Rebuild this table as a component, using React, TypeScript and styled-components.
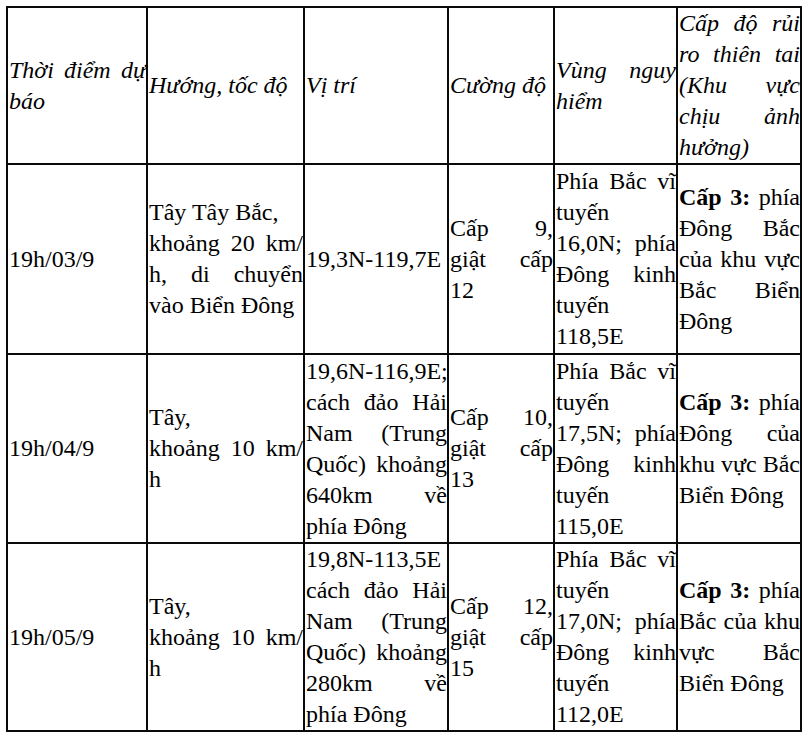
import React from "react";
import styled, { createGlobalStyle } from "styled-components";

const GlobalStyle = createGlobalStyle`
  html, body {
    margin: 0;
    padding: 0;
    background: #ffffff;
  }
  body {
    font-family: "Liberation Serif", "Times New Roman", serif;
    color: #000000;
  }
`;

const Page = styled.div`
  padding: 6px 0 0 6px;
`;

const Table = styled.table`
  border-collapse: separate;
  border-spacing: 0;
  table-layout: fixed;
  width: 796px;
  border-left: 2px solid #0a0a0a;
  border-top: 2px solid #0a0a0a;
  font-family: "Liberation Serif", "Times New Roman", serif;
  font-size: 24px;
  line-height: 31px;
  color: #000;
`;

const Col = styled.col<{ $w: number }>`
  width: ${(p) => p.$w}px;
`;

const Row = styled.tr<{ $h: number }>`
  height: ${(p) => p.$h}px;
`;

const HeadCell = styled.th`
  box-sizing: border-box;
  padding: 0 0 0 1px;
  border-right: 2px solid #0a0a0a;
  border-bottom: 2px solid #0a0a0a;
  vertical-align: middle;
  text-align: left;
  font-weight: normal;
  font-style: italic;
`;

const Cell = styled.td`
  box-sizing: border-box;
  padding: 0 0 0 1px;
  border-right: 2px solid #0a0a0a;
  border-bottom: 2px solid #0a0a0a;
  vertical-align: middle;
  text-align: left;
`;

const Line = styled.span<{ $justify?: boolean }>`
  display: block;
  white-space: nowrap;
  text-align: ${(p) => (p.$justify ? "justify" : "left")};
  text-align-last: ${(p) => (p.$justify ? "justify" : "left")};
`;

const Strong = styled.b`
  font-weight: bold;
`;

type L = { t: React.ReactNode; j?: boolean };

const widths = [140, 157, 144, 106, 123, 124];
const heights = [157, 190, 189, 187];

const header: L[][] = [
  [{ t: "Thời điểm dự", j: true }, { t: "báo" }],
  [{ t: "Hướng, tốc độ" }],
  [{ t: "Vị trí" }],
  [{ t: "Cường độ" }],
  [{ t: "Vùng nguy", j: true }, { t: "hiểm" }],
  [
    { t: "Cấp độ rủi", j: true },
    { t: "ro thiên tai", j: true },
    { t: "(Khu vực", j: true },
    { t: "chịu ảnh", j: true },
    { t: "hưởng)" },
  ],
];

const cap3 = (rest: string) => (
  <>
    <Strong>Cấp 3:</Strong> {rest}
  </>
);

const rows: L[][][] = [
  [
    [{ t: "19h/03/9" }],
    [
      { t: "Tây Tây Bắc," },
      { t: "khoảng 20 km/", j: true },
      { t: "h, di chuyển", j: true },
      { t: "vào Biển Đông" },
    ],
    [{ t: "19,3N-119,7E" }],
    [{ t: "Cấp 9,", j: true }, { t: "giật cấp", j: true }, { t: "12" }],
    [
      { t: "Phía Bắc vĩ", j: true },
      { t: "tuyến" },
      { t: "16,0N; phía", j: true },
      { t: "Đông kinh", j: true },
      { t: "tuyến" },
      { t: "118,5E" },
    ],
    [
      { t: cap3("phía"), j: true },
      { t: "Đông Bắc", j: true },
      { t: "của khu vực", j: true },
      { t: "Bắc Biển", j: true },
      { t: "Đông" },
    ],
  ],
  [
    [{ t: "19h/04/9" }],
    [{ t: "Tây," }, { t: "khoảng 10 km/", j: true }, { t: "h" }],
    [
      { t: "19,6N-116,9E;" },
      { t: "cách đảo Hải", j: true },
      { t: "Nam (Trung", j: true },
      { t: "Quốc) khoảng", j: true },
      { t: "640km về", j: true },
      { t: "phía Đông" },
    ],
    [{ t: "Cấp 10,", j: true }, { t: "giật cấp", j: true }, { t: "13" }],
    [
      { t: "Phía Bắc vĩ", j: true },
      { t: "tuyến" },
      { t: "17,5N; phía", j: true },
      { t: "Đông kinh", j: true },
      { t: "tuyến" },
      { t: "115,0E" },
    ],
    [
      { t: cap3("phía"), j: true },
      { t: "Đông của", j: true },
      { t: "khu vực Bắc", j: true },
      { t: "Biển Đông" },
    ],
  ],
  [
    [{ t: "19h/05/9" }],
    [{ t: "Tây," }, { t: "khoảng 10 km/", j: true }, { t: "h" }],
    [
      { t: "19,8N-113,5E" },
      { t: "cách đảo Hải", j: true },
      { t: "Nam (Trung", j: true },
      { t: "Quốc) khoảng", j: true },
      { t: "280km về", j: true },
      { t: "phía Đông" },
    ],
    [{ t: "Cấp 12,", j: true }, { t: "giật cấp", j: true }, { t: "15" }],
    [
      { t: "Phía Bắc vĩ", j: true },
      { t: "tuyến" },
      { t: "17,0N; phía", j: true },
      { t: "Đông kinh", j: true },
      { t: "tuyến" },
      { t: "112,0E" },
    ],
    [
      { t: cap3("phía"), j: true },
      { t: "Bắc của khu", j: true },
      { t: "vực Bắc", j: true },
      { t: "Biển Đông" },
    ],
  ],
];

const Lines = ({ lines }: { lines: L[] }) => (
  <>
    {lines.map((l, i) => (
      <Line key={i} $justify={l.j}>
        {l.t}
      </Line>
    ))}
  </>
);

export default function App() {
  return (
    <>
      <GlobalStyle />
      <Page>
        <Table>
          <colgroup>
            {widths.map((w, i) => (
              <Col key={i} $w={w} />
            ))}
          </colgroup>
          <thead>
            <Row $h={heights[0]}>
              {header.map((c, i) => (
                <HeadCell key={i}>
                  <Lines lines={c} />
                </HeadCell>
              ))}
            </Row>
          </thead>
          <tbody>
            {rows.map((r, ri) => (
              <Row key={ri} $h={heights[ri + 1]}>
                {r.map((c, ci) => (
                  <Cell key={ci}>
                    <Lines lines={c} />
                  </Cell>
                ))}
              </Row>
            ))}
          </tbody>
        </Table>
      </Page>
    </>
  );
}
